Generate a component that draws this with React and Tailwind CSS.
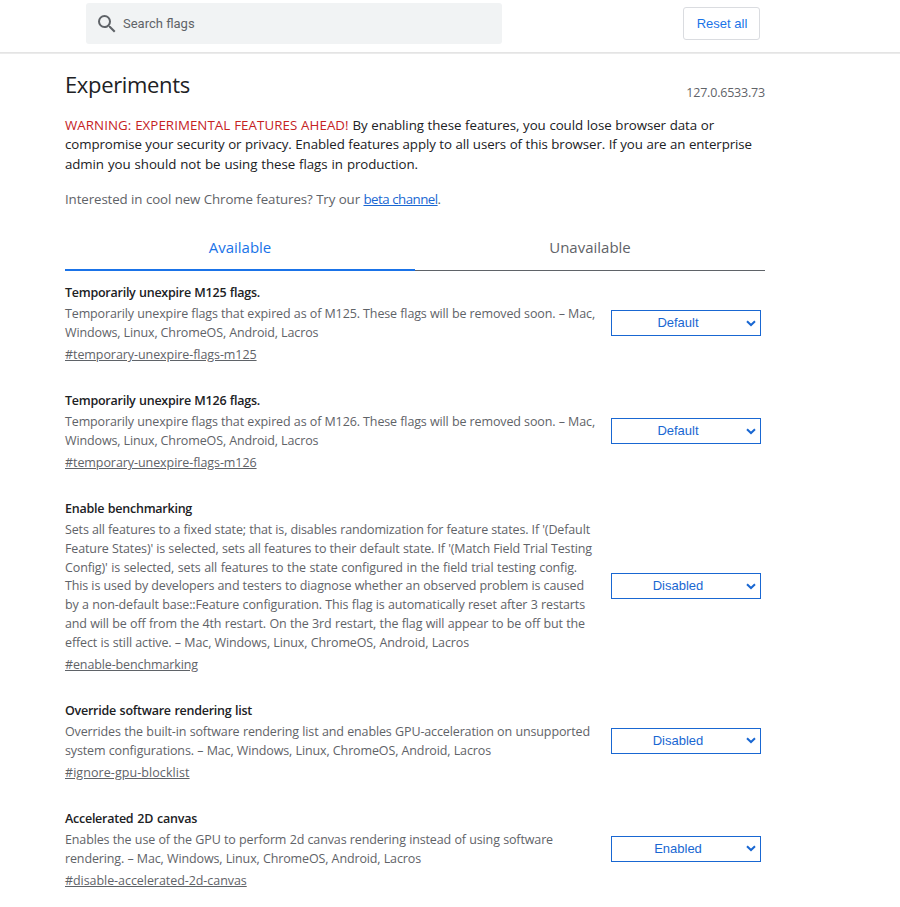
const flags = [
  {
    title: 'Temporarily unexpire M125 flags.',
    titleWidth: 'w-[195px]',
    lines: [
      ['Temporarily unexpire flags that expired as of M125. These flags will be removed soon. – Mac,', 'w-[530px]'],
      ['Windows, Linux, ChromeOS, Android, Lacros', 'w-[253px]'],
    ],
    link: '#temporary-unexpire-flags-m125',
    linkTracking: 'tracking-[-0.07px]',
    value: 'Default',
  },
  {
    title: 'Temporarily unexpire M126 flags.',
    titleWidth: 'w-[195px]',
    lines: [
      ['Temporarily unexpire flags that expired as of M126. These flags will be removed soon. – Mac,', 'w-[530px]'],
      ['Windows, Linux, ChromeOS, Android, Lacros', 'w-[253px]'],
    ],
    link: '#temporary-unexpire-flags-m126',
    linkTracking: 'tracking-[-0.07px]',
    value: 'Default',
  },
  {
    title: 'Enable benchmarking',
    titleWidth: 'w-[127px]',
    lines: [
      ["Sets all features to a fixed state; that is, disables randomization for feature states. If '(Default", 'w-[525px]'],
      ["Feature States)' is selected, sets all features to their default state. If '(Match Field Trial Testing", 'w-[527px]'],
      ["Config)' is selected, sets all features to the state configured in the field trial testing config.", 'w-[512px]'],
      ['This is used by developers and testers to diagnose whether an observed problem is caused', 'w-[519px]'],
      ['by a non-default base::Feature configuration. This flag is automatically reset after 3 restarts', 'w-[520px]'],
      ['and will be off from the 4th restart. On the 3rd restart, the flag will appear to be off but the', 'w-[520px]'],
      ['effect is still active. – Mac, Windows, Linux, ChromeOS, Android, Lacros', 'w-[404px]'],
    ],
    link: '#enable-benchmarking',
    linkTracking: 'tracking-[-0.12px]',
    value: 'Disabled',
  },
  {
    title: 'Override software rendering list',
    titleWidth: 'w-[187px]',
    lines: [
      ['Overrides the built-in software rendering list and enables GPU-acceleration on unsupported', 'w-[525px]'],
      ['system configurations. – Mac, Windows, Linux, ChromeOS, Android, Lacros', 'w-[426px]'],
    ],
    link: '#ignore-gpu-blocklist',
    linkTracking: 'tracking-[0.07px]',
    value: 'Disabled',
  },
  {
    title: 'Accelerated 2D canvas',
    titleWidth: 'w-[132px]',
    lines: [
      ['Enables the use of the GPU to perform 2d canvas rendering instead of using software', 'w-[488px]'],
      ['rendering. – Mac, Windows, Linux, ChromeOS, Android, Lacros', 'w-[356px]'],
    ],
    link: '#disable-accelerated-2d-canvas',
    linkTracking: 'tracking-[-0.06px]',
    value: 'Enabled',
  },
];

function Line({ width, children }) {
  return <span className={`block whitespace-nowrap [text-align-last:justify] ${width}`}>{children}</span>;
}

function Flag({ flag }) {
  return (
    <section className="mb-[26.8px] flex items-center">
      <div className="w-[546px] shrink-0 text-[12.5px] leading-[18.8px] text-[#5f6368]">
        <h3 className="mb-[2.3px] font-semibold tracking-[-0.25px] text-[#202124]">
          <Line width={flag.titleWidth}>{flag.title}</Line>
        </h3>
        <p className="mb-[3.7px] tracking-[-0.13px]">
          {flag.lines.map(([text, width]) => (
            <Line key={text} width={width}>{text}</Line>
          ))}
        </p>
        <a href="#" className={`block w-fit underline ${flag.linkTracking}`}>{flag.link}</a>
      </div>
      <button className="mb-[3px] flex h-[26px] w-[150px] items-center border border-[#1967d2] pr-[4px] font-['Liberation_Sans',sans-serif] text-[13px] text-[#1967d2]">
        <span className="mr-[2px] flex-1 pb-px text-center">{flag.value}</span>
        <svg width="10" height="7" viewBox="0 0 10 7" fill="none" stroke="#1967d2" strokeWidth="2">
          <path d="M1 1.2 5 5 9 1.2" />
        </svg>
      </button>
    </section>
  );
}

export default function App() {
  return (
    <div className="h-[907px] overflow-hidden bg-white font-['Open_Sans','Noto_Sans',sans-serif] text-[#202124]">
      <header className="flex h-[53px] items-start border-b border-[#e4e4e4] pl-[86px] shadow-[0_1px_0_#ebebeb]">
        <div className="mt-[3px] flex h-[41px] w-[416px] items-center rounded-[3px] bg-[#f1f3f4] pl-[9px] font-['Roboto',sans-serif] text-[13px] text-[#5f6368]">
          <svg width="24" height="24" viewBox="0 0 24 24" fill="#5f6368">
            <path d="M15.5 14h-.79l-.28-.27A6.471 6.471 0 0 0 16 9.5 6.5 6.5 0 1 0 9.5 16c1.61 0 3.09-.59 4.23-1.57l.27.28v.79l5 4.99L20.49 19l-4.99-5zm-6 0C7.01 14 5 11.99 5 9.5S7.01 5 9.5 5 14 7.01 14 9.5 11.99 14 9.5 14z" />
          </svg>
          <span className="ml-[4px]">Search flags</span>
        </div>
        <button className="ml-[181px] mt-[7px] h-[33px] w-[77px] rounded-[3px] border border-[#dadce0] pl-px font-['Liberation_Sans',sans-serif] text-[13px] text-[#1a73e8]">
          Reset all
        </button>
      </header>

      <main className="ml-[65px] w-[700px] pt-[15px]">
        <div className="flex h-[32px] justify-between">
          <h1 className="text-[22px] leading-[32px] tracking-[-0.35px]">Experiments</h1>
          <span className="mt-[16px] text-[12.5px] leading-[18px] tracking-[-0.2px] text-[#5f6368]">127.0.6533.73</span>
        </div>
        <p className="mt-[15.5px] text-[13.3px] leading-[19.5px]">
          <Line width="w-[649px] tracking-[-0.08px]">
            <span className="tracking-[0.06px] text-[#c5221f]">WARNING: EXPERIMENTAL FEATURES AHEAD!</span> By enabling these features, you could lose browser data or
          </Line>
          <Line width="w-[687px] tracking-[-0.09px]">compromise your security or privacy. Enabled features apply to all users of this browser. If you are an enterprise</Line>
          <Line width="w-[353px] tracking-[-0.08px]">admin you should not be using these flags in production.</Line>
        </p>
        <p className="mt-[15.5px] text-[13.3px] leading-[19.5px] tracking-[-0.1px] text-[#5f6368]">
          <Line width="w-[376px]">
            Interested in cool new Chrome features? Try our <a href="#" className="tracking-[-0.52px] text-[#1967d2] underline">beta channel</a>.
          </Line>
        </p>
        <nav className="mt-[15px] flex h-[47px] text-center text-[15px] leading-[47px]">
          <div className="w-[350px] border-b-2 border-[#1a73e8] text-[#1a73e8]">Available</div>
          <div className="w-[350px] border-b border-[#5f6368] text-[#5f6368]">Unavailable</div>
        </nav>
        <div className="pt-[13px]">
          {flags.map((flag) => (
            <Flag key={flag.title} flag={flag} />
          ))}
        </div>
      </main>
    </div>
  );
}
